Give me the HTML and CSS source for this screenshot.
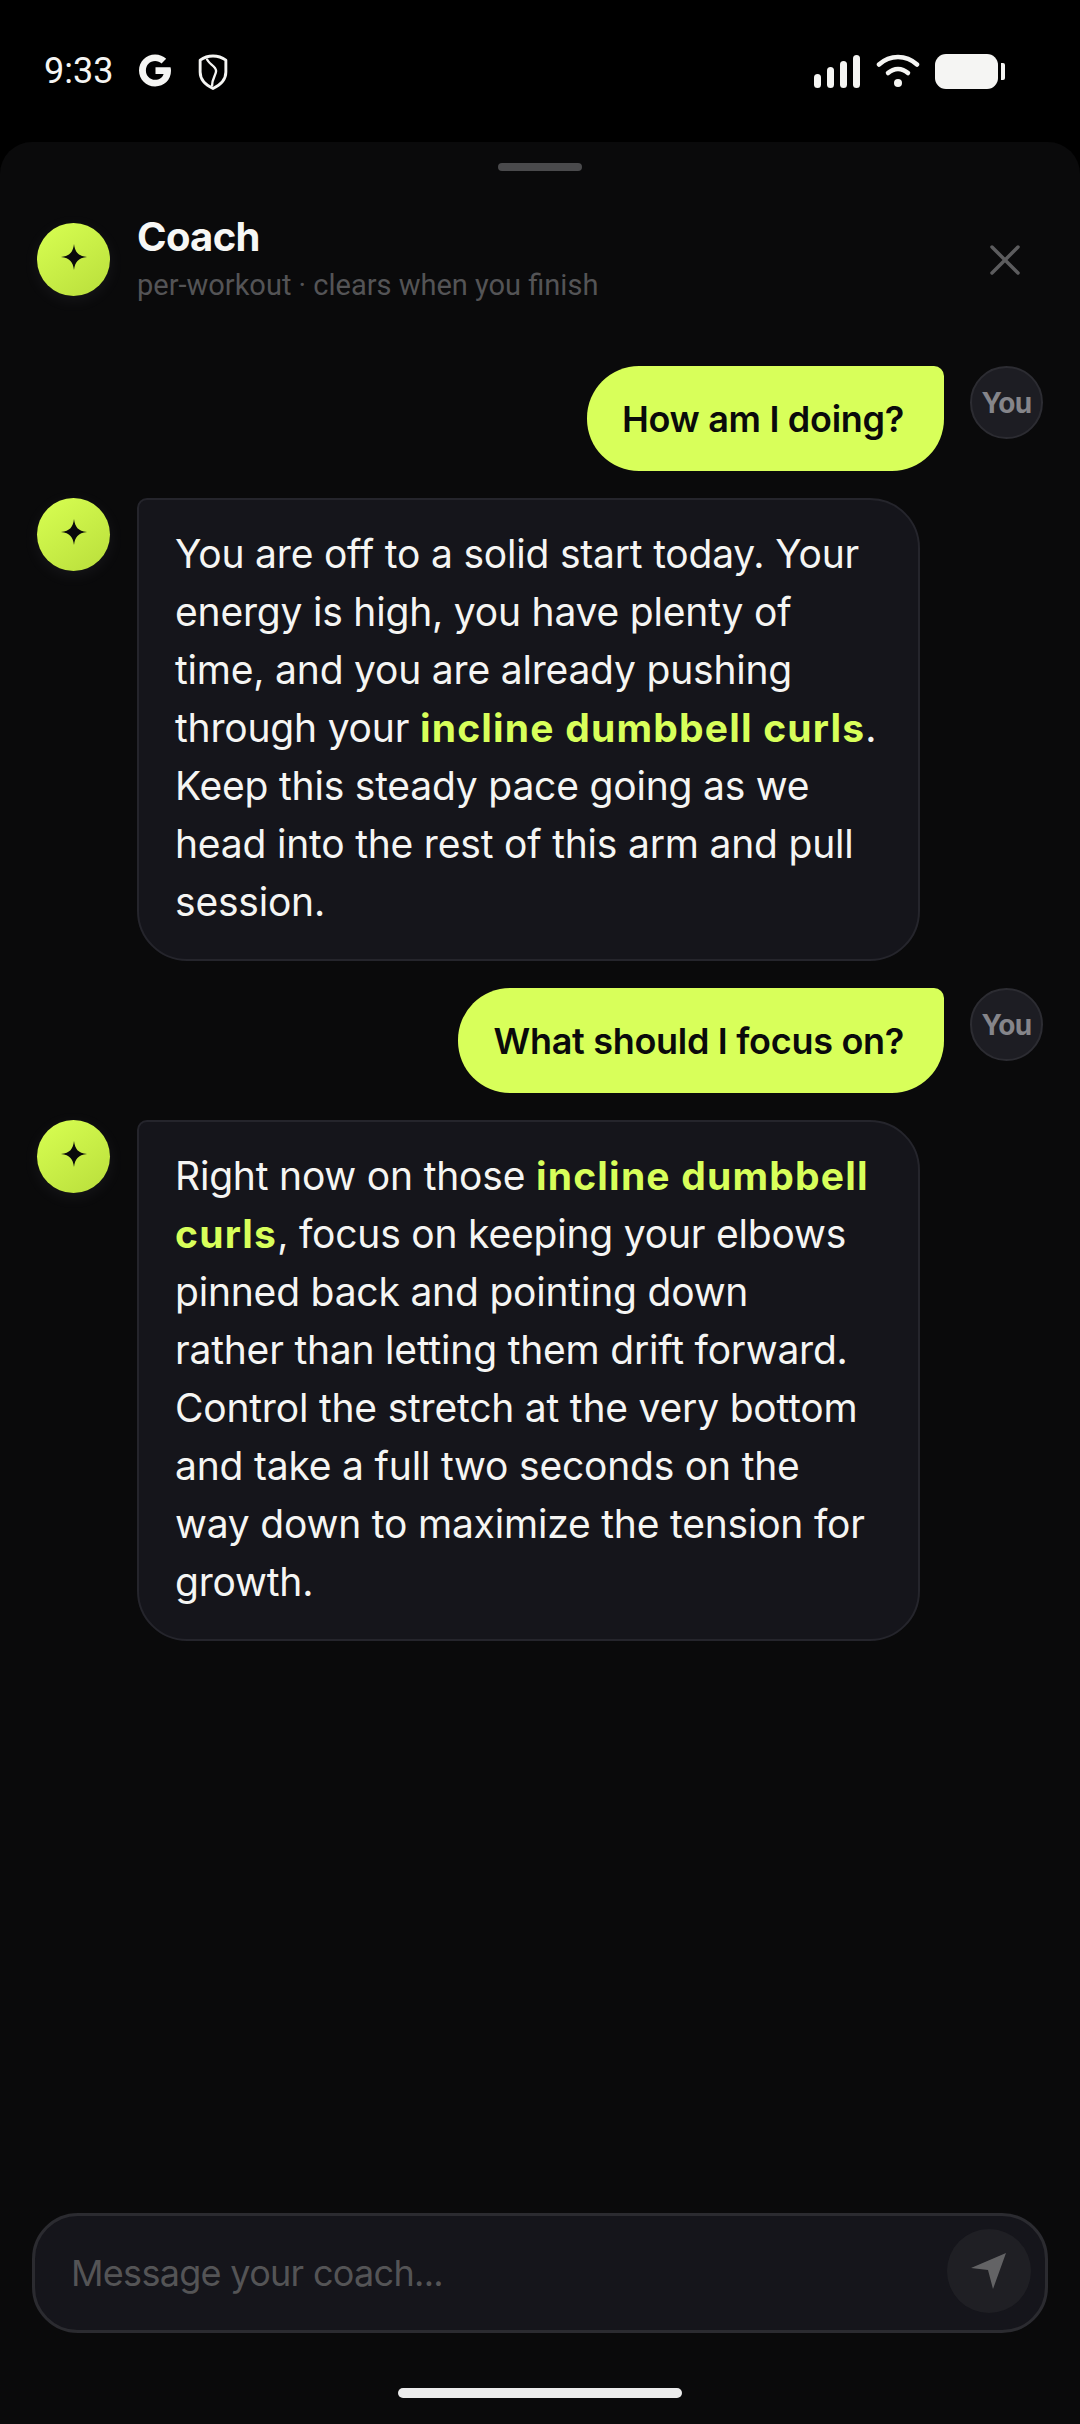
FILE: index.html
```html
<!DOCTYPE html>
<html lang="en">
<head>
    <meta charset="UTF-8">
    <meta name="viewport" content="width=device-width, initial-scale=1.0">
    <title>Coach</title>
    <link rel="stylesheet" href="styles.css">
</head>
<body>

<div class="statusbar">
    <div class="status-left">
        <span class="time">9:33</span>
        <svg class="icon-g" viewBox="3 3 26 26"><path d="M28.600 13.400H16.400v5.400h6.600c-.9 3-3.500 4.700-6.900 4.700-4.300 0-7.500-3.400-7.500-7.600s3.200-7.600 7.500-7.600c2.100 0 3.900.8 5.200 2l3.800-3.800C22.800 4.300 19.700 3 16.100 3 8.700 3 3 8.700 3 16s5.700 13 13.100 13C23.500 29 29 23.800 29 16.300c0-1-.1-1.900-.4-2.900z" fill="#f5f5f3"/></svg>
        <svg class="icon-shield" viewBox="1 .5 28 35" fill="none" stroke="#f5f5f3" stroke-width="2.800" stroke-linejoin="round"><path d="M15 2.500C19 2.500 24 4 27.500 6.500V18c0 7.500-5 12.500-12.500 16C7.500 30.500 2.500 25.500 2.500 18V6.500C6 4 11 2.500 15 2.500z"/><path d="M9 5c1 5 9 7 9 12 0 4-4 7-4 15" stroke-width="2.300"/></svg>
    </div>
    <div class="status-right">
        <div class="signal">
            <span class="bar bar-1"></span>
            <span class="bar bar-2"></span>
            <span class="bar bar-3"></span>
            <span class="bar bar-4"></span>
        </div>
        <svg class="icon-wifi" viewBox="0 0 44 34" fill="none" stroke="#f5f5f3" stroke-linecap="round" stroke-width="4.500"><path d="M3 10.500C14 .5 30 .5 41 10.500"/><path d="M12 19c6-5.500 14-5.500 20 0"/><circle cx="22" cy="29" r="4" fill="#f5f5f3" stroke="none"/></svg>
        <div class="battery">
            <span class="battery-body"></span>
            <span class="battery-tip"></span>
        </div>
    </div>
</div>

<div class="sheet">
    <div class="handle"></div>

    <div class="header">
        <div class="avatar">
            <svg class="star" viewBox="0 0 26 26"><path d="M13 0c1 8 4 12 13 13-9 1-12 5-13 13-1-8-4-12-13-13 9-1 12-5 13-13z"/></svg>
        </div>
        <div class="header-text">
            <div class="title">Coach</div>
            <div class="subtitle">per-workout · clears when you finish</div>
        </div>
        <svg class="close" viewBox="0 0 30 30" fill="none" stroke="#5c5c5e" stroke-width="3.500" stroke-linecap="round"><path d="M2 2 28 28M28 2 2 28"/></svg>
    </div>

    <div class="messages">
        <div class="row row-user">
            <div class="bubble-user">How am I doing?</div>
            <div class="you">You</div>
        </div>

        <div class="row">
            <div class="avatar">
                <svg class="star" viewBox="0 0 26 26"><path d="M13 0c1 8 4 12 13 13-9 1-12 5-13 13-1-8-4-12-13-13 9-1 12-5 13-13z"/></svg>
            </div>
            <div class="bubble-coach">You are off to a solid start today. Your<br>energy is high, you have plenty of<br>time, and you are already pushing<br>through your <strong>incline dumbbell curls</strong>.<br>Keep this steady pace going as we<br>head into the rest of this arm and pull<br>session.</div>
        </div>

        <div class="row row-user">
            <div class="bubble-user">What should I focus on?</div>
            <div class="you">You</div>
        </div>

        <div class="row">
            <div class="avatar">
                <svg class="star" viewBox="0 0 26 26"><path d="M13 0c1 8 4 12 13 13-9 1-12 5-13 13-1-8-4-12-13-13 9-1 12-5 13-13z"/></svg>
            </div>
            <div class="bubble-coach">Right now on those <strong>incline dumbbell<br>curls</strong>, focus on keeping your elbows<br>pinned back and pointing down<br>rather than letting them drift forward.<br>Control the stretch at the very bottom<br>and take a full two seconds on the<br>way down to maximize the tension for<br>growth.</div>
        </div>
    </div>

    <div class="composer">
        <span class="placeholder">Message your coach...</span>
        <div class="send">
            <svg class="send-icon" viewBox="0 0 36 38"><path d="M35 1 22 37 17 18 0 16z"/></svg>
        </div>
    </div>

    <div class="homebar"></div>
</div>

</body>
</html>
```

FILE: styles.css
```css
* {
    box-sizing: border-box;
}
html, body {
    margin: 0;
    padding: 0;
}
body {
    width: 1080px;
    height: 2424px;
    background-color: #000;
    font-family: Inter, "Noto Sans", sans-serif;
    color: #f5f5f3;
    display: flex;
    flex-direction: column;
    overflow: hidden;
}

/* status bar */
.statusbar {
    height: 142px;
    flex: none;
    display: flex;
    justify-content: space-between;
    padding: 54px 75px 0 44px;
}
.status-left, .status-right {
    display: flex;
    align-items: flex-start;
}
.time {
    font-family: Roboto, sans-serif;
    font-size: 36px;
    line-height: 34px;
    width: 95px;
    color: #f5f5f3;
}
.icon-g {
    width: 32px;
    height: 33px;
}
.icon-shield {
    width: 30px;
    height: 36px;
    margin-left: 27px;
}
.signal {
    display: flex;
    align-items: flex-end;
    gap: 6px;
    height: 34px;
}
.bar {
    width: 7px;
    background-color: #f5f5f3;
    border-radius: 4px;
}
.bar-1 { height: 14px; }
.bar-2 { height: 21px; }
.bar-3 { height: 27px; }
.bar-4 { height: 33px; }
.icon-wifi {
    width: 44px;
    height: 34px;
    margin-left: 16px;
}
.battery {
    display: flex;
    align-items: center;
    margin-left: 15px;
}
.battery-body {
    width: 63px;
    height: 35px;
    background-color: #f5f5f3;
    border-radius: 11px;
}
.battery-tip {
    width: 4px;
    height: 17px;
    margin-left: 3px;
    background-color: #f5f5f3;
    border-radius: 0 2px 2px 0;
}

/* sheet */
.sheet {
    flex: 1;
    background-color: #0a0a0b;
    border-radius: 32px 32px 0 0;
    display: flex;
    flex-direction: column;
    padding: 21px 0 0;
}
.handle {
    width: 84px;
    height: 8px;
    flex: none;
    margin: 0 auto;
    background-color: #4a4a4c;
    border-radius: 4px;
}
.header {
    display: flex;
    align-items: center;
    margin-top: 43px;
    padding: 0 60px 0 37px;
}
.avatar {
    width: 73px;
    height: 73px;
    flex: none;
    border-radius: 50%;
    background: linear-gradient(145deg, #d8ff52, #b9de3b);
    box-shadow: 0 4px 16px rgba(200, 200, 230, 0.07);
    display: flex;
    align-items: center;
    justify-content: center;
}
.star {
    width: 26px;
    height: 26px;
    margin-top: -6px;
    fill: #0a0a0b;
}
.header-text {
    flex: 1;
    margin-left: 27px;
}
.title {
    font-size: 40px;
    font-weight: 700;
    line-height: 46px;
    letter-spacing: -0.7px;
    color: #f7f7f5;
}
.subtitle {
    font-family: Roboto, sans-serif;
    font-size: 29px;
    line-height: 40px;
    margin-top: 5px;
    color: #545456;
}
.close {
    width: 30px;
    height: 30px;
}

/* messages */
.messages {
    flex: 1;
    display: flex;
    flex-direction: column;
    gap: 27px;
    margin-top: 61px;
    padding: 0 37px;
}
.row {
    display: flex;
    align-items: flex-start;
    gap: 27px;
}
.row-user {
    justify-content: flex-end;
    gap: 26px;
}
.bubble-user {
    height: 105px;
    padding: 0 40px 0 35px;
    display: flex;
    align-items: center;
    font-size: 36px;
    font-weight: 600;
    letter-spacing: -0.3px;
    color: #0a0a0b;
    background-color: #d8ff5a;
    border-radius: 52px 10px 52px 52px;
}
.you {
    width: 73px;
    height: 73px;
    flex: none;
    border-radius: 50%;
    background-color: #1d1d23;
    border: 2px solid #2c2c32;
    color: #85858a;
    font-size: 28px;
    font-weight: 700;
    letter-spacing: -0.6px;
    display: flex;
    align-items: center;
    justify-content: center;
}
.bubble-coach {
    width: 783px;
    padding: 25px 36px 28px;
    font-size: 39px;
    line-height: 58px;
    letter-spacing: -0.2px;
    white-space: nowrap;
    color: #f5f5f3;
    background-color: #15151b;
    border: 2px solid #25252c;
    border-radius: 10px 50px 50px 50px;
}
.bubble-coach strong {
    font-weight: 700;
    letter-spacing: 1.2px;
    color: #d8ff5a;
}

/* composer */
.composer {
    height: 120px;
    flex: none;
    margin: 0 32px;
    padding: 0 14px 0 36px;
    display: flex;
    align-items: center;
    justify-content: space-between;
    background-color: #15151b;
    border: 3px solid #2b2b30;
    border-radius: 46px;
}
.placeholder {
    font-size: 36px;
    letter-spacing: -0.7px;
    color: #545456;
}
.send {
    width: 84px;
    height: 84px;
    margin-top: -4px;
    border-radius: 50%;
    background-color: #1f1f24;
    display: flex;
    align-items: center;
    justify-content: center;
}
.send-icon {
    width: 36px;
    height: 38px;
    fill: #636365;
}
.homebar {
    width: 284px;
    height: 10px;
    flex: none;
    margin: 55px auto 26px;
    background-color: #ececec;
    border-radius: 5px;
}
```
